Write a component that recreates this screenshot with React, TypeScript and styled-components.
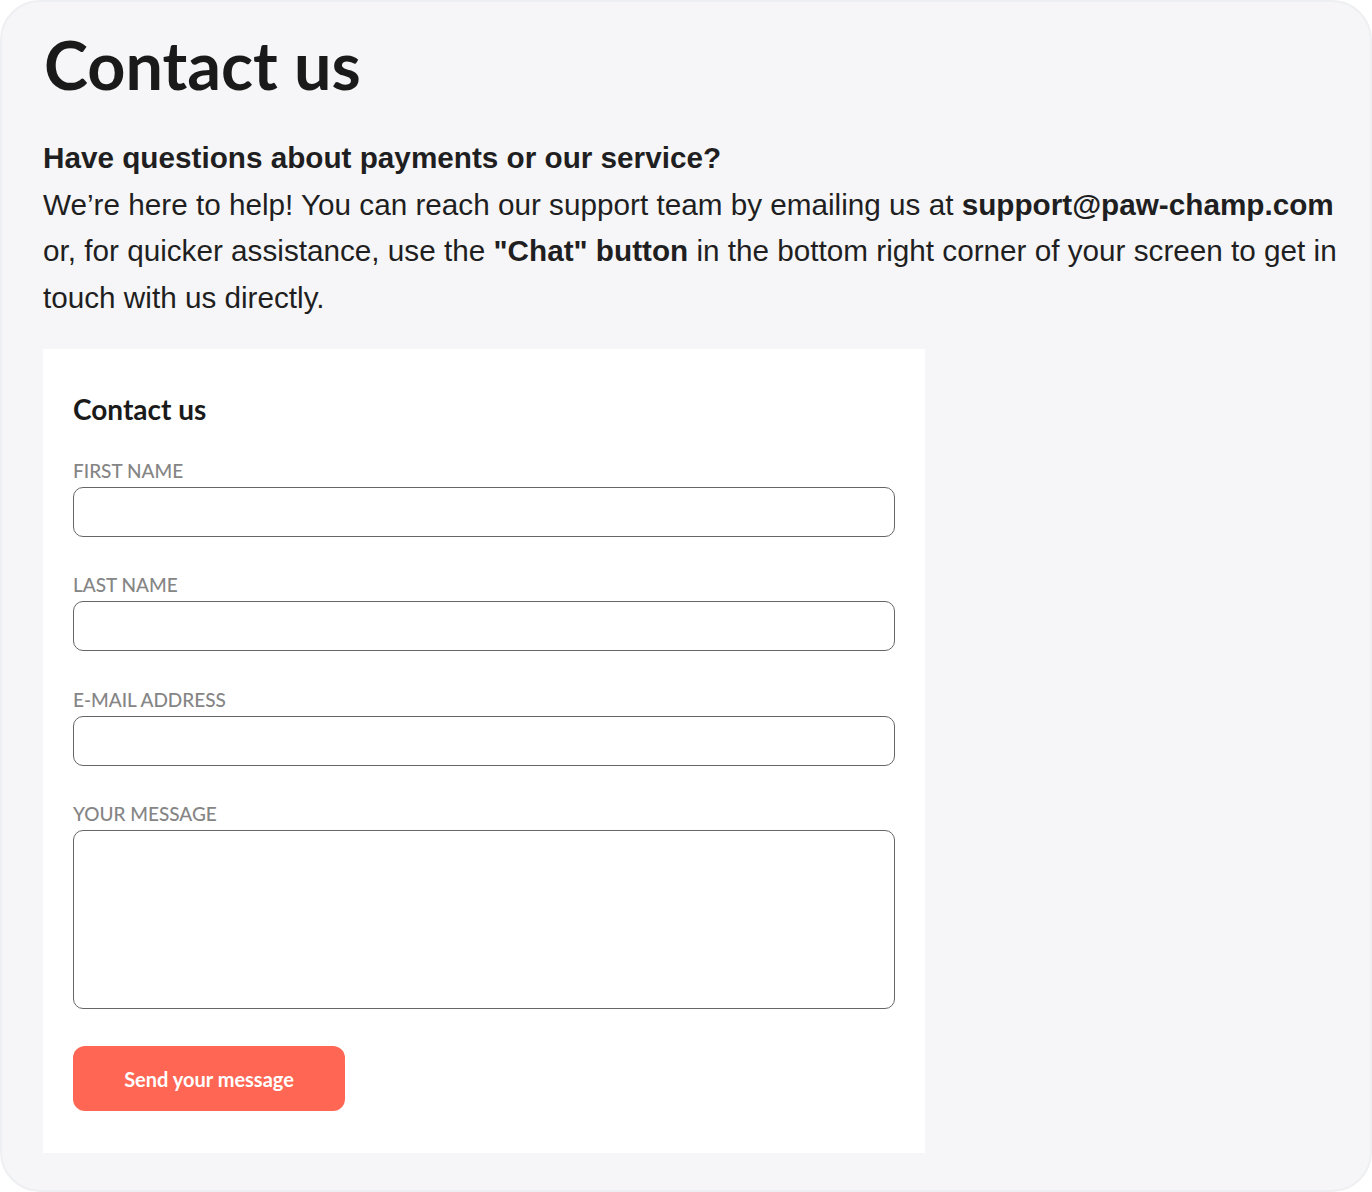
import React from "react";
import styled, { createGlobalStyle } from "styled-components";

const GlobalStyle = createGlobalStyle`
  html, body {
    margin: 0;
    padding: 0;
    background: #ffffff;
  }
  * {
    box-sizing: border-box;
  }
`;

const Page = styled.div`
  width: 1372px;
  height: 1192px;
  background-color: #f6f6f8;
  border: 2px solid #eeeff2;
  border-radius: 40px;
  padding: 22px 20px 0 41px;
`;

const Title = styled.h1`
  margin: 0;
  font-family: Lato, "Noto Sans", sans-serif;
  font-weight: 700;
  font-size: 66.5px;
  line-height: 80px;
  color: #1a1a1a;
  padding-left: 1px;
`;

const Intro = styled.div`
  margin-top: 31px;
  font-family: "Liberation Sans", Arial, sans-serif;
  font-size: 29.7px;
  line-height: 46.5px;
  color: #1f1f22;
  white-space: nowrap;
`;

const IntroHeading = styled.p`
  margin: 0;
  font-weight: 700;
`;

const IntroText = styled.p`
  margin: 0;
`;

const Strong = styled.b`
  font-weight: 700;
`;

const Card = styled.form`
  margin-top: 28px;
  width: 882px;
  background-color: #ffffff;
  padding: 42px 30px 42px 30px;
  display: flex;
  flex-direction: column;
`;

const CardTitle = styled.h2`
  margin: 0 0 33px;
  font-family: Lato, "Noto Sans", sans-serif;
  font-weight: 700;
  font-size: 28px;
  line-height: 36px;
  color: #1a1a1a;
`;

const Field = styled.label<{ $gap?: number }>`
  display: flex;
  flex-direction: column;
  gap: 5px;
  margin-bottom: ${({ $gap }) => $gap ?? 37}px;
`;

const Label = styled.span`
  font-family: Lato, "Noto Sans", sans-serif;
  font-weight: 500;
  font-size: 19px;
  line-height: 22px;
  color: #858585;
  text-transform: uppercase;
`;

const Input = styled.input`
  display: block;
  width: 100%;
  height: 50px;
  border: 1.5px solid #666666;
  border-radius: 10px;
  background: #ffffff;
  padding: 0 14px;
  font-size: 18px;
  outline: none;
`;

const TextArea = styled.textarea`
  display: block;
  width: 100%;
  height: 179px;
  border: 1.5px solid #666666;
  border-radius: 10px;
  background: #ffffff;
  padding: 12px 14px;
  font-size: 18px;
  resize: none;
  outline: none;
`;

const SendButton = styled.button`
  align-self: flex-start;
  width: 272px;
  height: 65px;
  border: none;
  border-radius: 12px;
  background-color: #ff6654;
  color: #ffffff;
  font-family: Lato, "Noto Sans", sans-serif;
  font-weight: 700;
  font-size: 20px;
  cursor: pointer;
`;

const fields = [
  { label: "First name", type: "text", gap: 37 },
  { label: "Last name", type: "text", gap: 38 },
  { label: "E-mail address", type: "email", gap: 37 },
];

const App = () => (
  <>
    <GlobalStyle />
    <Page>
      <Title>Contact us</Title>
      <Intro>
        <IntroHeading>Have questions about payments or our service?</IntroHeading>
        <IntroText>
          We’re here to help! You can reach our support team by emailing us at{" "}
          <Strong>support@paw-champ.com</Strong>
          <br />
          or, for quicker assistance, use the <Strong>"Chat" button</Strong> in the bottom
          right corner of your screen to get in
          <br />
          touch with us directly.
        </IntroText>
      </Intro>
      <Card onSubmit={(e) => e.preventDefault()}>
        <CardTitle>Contact us</CardTitle>
        {fields.map((f) => (
          <Field key={f.label} $gap={f.gap}>
            <Label>{f.label}</Label>
            <Input type={f.type} />
          </Field>
        ))}
        <Field $gap={37}>
          <Label>Your message</Label>
          <TextArea />
        </Field>
        <SendButton type="submit">Send your message</SendButton>
      </Card>
    </Page>
  </>
);

export default App;
